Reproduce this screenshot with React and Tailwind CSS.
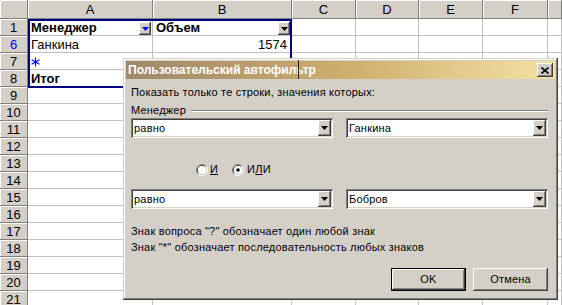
import React from 'react'

const RAISED =
  'shadow-[inset_-1px_-1px_0_#404040,inset_1px_1px_0_#ffffff,inset_-2px_-2px_0_#808080,inset_2px_2px_0_#d4d0c8]'
const SUNKEN =
  'shadow-[inset_1px_1px_0_#808080,inset_-1px_-1px_0_#ffffff,inset_2px_2px_0_#404040,inset_-2px_-2px_0_#d4d0c8]'

const COLS = ['A', 'B', 'C', 'D', 'E', 'F', '']

const ROWS = [
  { n: 1, a: 'Менеджер', b: 'Объем', head: true },
  { n: 6, a: 'Ганкина', b: '1574', filtered: true },
  { n: 7, star: true },
  { n: 8, a: 'Итог', total: true },
  ...Array.from({ length: 13 }, (_, i) => ({ n: 9 + i })),
]

function Arrow({ color = '#000000' }) {
  return (
    <svg width="7" height="4" viewBox="0 0 7 4">
      <path d="M0 0h7L3.5 4z" fill={color} />
    </svg>
  )
}

function FilterButton({ color }) {
  return (
    <div className={`absolute right-[1px] top-[3px] w-[12px] h-[13px] bg-[#d4d0c8] flex items-center justify-center ${RAISED}`}>
      <Arrow color={color} />
    </div>
  )
}

function Star() {
  return (
    <svg width="9" height="10" viewBox="0 0 9 10" className="mt-[1px]">
      <g stroke="#0000ff" strokeWidth="1.1">
        <path d="M4.5 0.5v9" />
        <path d="M0.6 2.7l7.8 4.6" />
        <path d="M0.6 7.3l7.8-4.6" />
      </g>
    </svg>
  )
}

function Sheet() {
  return (
    <div className="grid grid-cols-[28px_125px_139px_64px_63px_64px_65px_1fr] font-['Liberation_Sans',Arial,sans-serif] text-[13px] text-black">
      <div className="h-[19px] bg-[#d4d0c8] border-r border-b border-[#808080] shadow-[inset_1px_1px_0_#ffffff]" />
      {COLS.map((c, i) => (
        <div
          key={i}
          className="h-[19px] bg-[#d4d0c8] border-r border-b border-[#808080] shadow-[inset_1px_1px_0_#ffffff] flex items-center justify-center leading-none"
        >
          {c}
        </div>
      ))}
      {ROWS.map((r) => (
        <React.Fragment key={r.n}>
          <div
            className={`h-[17px] bg-[#d4d0c8] border-r border-b border-[#808080] shadow-[inset_1px_1px_0_#ffffff] flex items-center justify-center leading-none ${
              r.filtered ? 'text-[#0000ff]' : 'text-black'
            }`}
          >
            {r.n}
          </div>
          <div className="relative h-[17px] border-r border-b border-[#c0c0c0] flex items-center pl-[3px] leading-none">
            {r.star ? <Star /> : <span className={r.head || r.total ? 'font-bold' : ''}>{r.a}</span>}
            {r.head && <FilterButton color="#0000ff" />}
          </div>
          <div
            className={`relative h-[17px] border-r border-b border-[#c0c0c0] flex items-center leading-none ${
              r.head ? 'pl-[3px]' : 'justify-end pr-[4px]'
            }`}
          >
            <span className={r.head ? 'font-bold' : ''}>{r.b}</span>
            {r.head && <FilterButton color="#000000" />}
          </div>
          {[0, 1, 2, 3, 4].map((k) => (
            <div key={k} className="h-[17px] border-r border-b border-[#c0c0c0]" />
          ))}
        </React.Fragment>
      ))}
    </div>
  )
}

function Combo({ value }) {
  return (
    <div className={`flex h-[20px] w-[202px] bg-white p-[2px] ${SUNKEN}`}>
      <div className="flex-1 pl-[1px] leading-[16px] text-[11px]">{value}</div>
      <div className={`w-[13px] h-full bg-[#d4d0c8] flex items-center justify-center ${RAISED}`}>
        <Arrow />
      </div>
    </div>
  )
}

function Radio({ checked }) {
  return (
    <svg width="12" height="12" viewBox="0 0 12 12">
      <path d="M2.11 9.89A5.5 5.5 0 0 1 9.89 2.11" stroke="#808080" fill="none" />
      <path d="M9.89 2.11A5.5 5.5 0 0 1 2.11 9.89" stroke="#ffffff" fill="none" />
      <path d="M2.82 9.18A4.5 4.5 0 0 1 9.18 2.82" stroke="#404040" fill="none" />
      <path d="M9.18 2.82A4.5 4.5 0 0 1 2.82 9.18" stroke="#d4d0c8" fill="none" />
      <circle cx="6" cy="6" r="4" fill="#ffffff" />
      {checked && <circle cx="6" cy="6" r="1.8" fill="#000000" />}
    </svg>
  )
}

function Dialog() {
  return (
    <div
      className={`absolute left-[123px] top-[58px] w-[435px] h-[242px] bg-[#d4d0c8] p-[3px] font-['Liberation_Sans',Arial,sans-serif] text-[11px] tracking-[0.2px] text-black shadow-[inset_-1px_-1px_0_#404040,inset_1px_1px_0_#d4d0c8,inset_-2px_-2px_0_#808080,inset_2px_2px_0_#ffffff]`}
    >
      <div className="relative h-[18px] flex items-center justify-between pl-[2px] pr-[2px] bg-linear-to-r from-[#9e896a] via-[#cdac6c] to-[#f5e2a6]">
        <span className="font-bold text-white text-[12px] tracking-normal leading-none">Пользовательский автофильтр</span>
        <div className={`w-[16px] h-[14px] bg-[#d4d0c8] flex items-center justify-center ${RAISED}`}>
          <svg width="8" height="7" viewBox="0 0 8 7">
            <path d="M0.5 0.5l7 6M7.5 0.5l-7 6" stroke="#000000" strokeWidth="1.6" />
          </svg>
        </div>
        <div className="absolute left-[172px] top-[-1px] w-px h-[19px] bg-[#2b2010]" />
      </div>

      <div className="px-[5px] pt-[7px] flex flex-col">
        <div className="leading-[13px]">Показать только те строки, значения которых:</div>

        <div className="mt-[5px] flex items-center leading-[13px]">
          <span>Менеджер</span>
          <div className="flex-1 ml-[5px] mr-[2px] h-[2px] border-t border-[#808080] border-b border-b-white" />
        </div>

        <div className="mt-[1px] flex justify-between pr-[2px]">
          <Combo value="равно" />
          <Combo value="Ганкина" />
        </div>

        <div className="mt-[25px] h-[13px] flex items-center pl-[65px] leading-[13px]">
          <Radio />
          <span className="ml-[2px] underline">И</span>
          <span className="ml-[14px] flex items-center">
            <Radio checked />
          </span>
          <span className="ml-[3px]">
            И<span className="underline">Л</span>И
          </span>
        </div>

        <div className="mt-[13px] flex justify-between pr-[2px]">
          <Combo value="равно" />
          <Combo value="Бобров" />
        </div>

        <div className="mt-[14px] leading-[16px]">
          <div>Знак вопроса "?" обозначает один любой знак</div>
          <div>Знак "*" обозначает последовательность любых знаков</div>
        </div>

        <div className="mt-[13px] flex justify-end gap-[7px] pr-[2px]">
          <div className="w-[75px] h-[23px] border border-black">
            <div className={`w-full h-full bg-[#d4d0c8] flex items-center justify-center ${RAISED}`}>OK</div>
          </div>
          <div className={`w-[75px] h-[23px] bg-[#d4d0c8] flex items-center justify-center ${RAISED}`}>Отмена</div>
        </div>
      </div>
    </div>
  )
}

export default function App() {
  return (
    <div className="relative w-[562px] h-[305px] overflow-hidden bg-white">
      <Sheet />
      {/* list border around A1:B8 */}
      <div className="absolute left-[28px] top-[19px] w-[264px] h-[69px] border-2 border-[#000080] pointer-events-none" />
      <Dialog />
    </div>
  )
}
